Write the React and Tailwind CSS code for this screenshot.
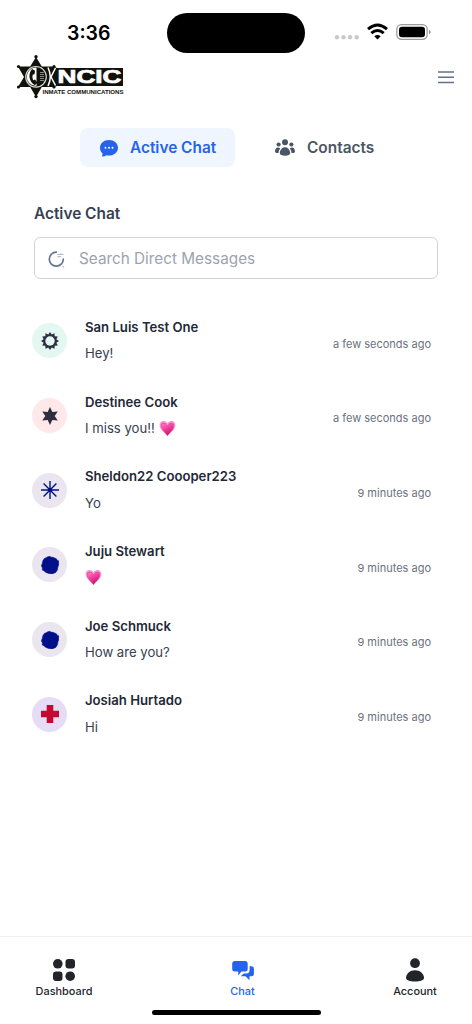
import React from 'react';
import clsx from 'clsx';

const chats = [
  { name: 'San Luis Test One', message: 'Hey!', time: 'a few seconds ago', icon: 'gear', bg: 'bg-[#e4f8f2]' },
  { name: 'Destinee Cook', message: 'I miss you!!', heart: true, time: 'a few seconds ago', icon: 'star', bg: 'bg-[#ffe8ea]' },
  { name: 'Sheldon22 Coooper223', message: 'Yo', time: '9 minutes ago', icon: 'burst', bg: 'bg-[#ebe5f0]' },
  { name: 'Juju Stewart', message: '', heart: true, time: '9 minutes ago', icon: 'blob', bg: 'bg-[#ebe5f0]' },
  { name: 'Joe Schmuck', message: 'How are you?', time: '9 minutes ago', icon: 'blob', bg: 'bg-[#ebe5f0]' },
  { name: 'Josiah Hurtado', message: 'Hi', time: '9 minutes ago', icon: 'cross', bg: 'bg-[#e7dcf5]' },
];

// Evenly spaced star outline around (cx, cy)
const starPoints = (cx, cy, outer, inner, count) =>
  Array.from({ length: count * 2 }, (_, i) => {
    const r = i % 2 ? inner : outer;
    const a = (Math.PI * i) / count - Math.PI / 2;
    return `${(cx + r * Math.cos(a)).toFixed(2)},${(cy + r * Math.sin(a)).toFixed(2)}`;
  }).join(' ');

const AvatarIcon = ({ type }) => (
  <svg viewBox="0 0 18 18" className="size-[18px]">
    {type === 'gear' && (
      <>
        <polygon points={starPoints(9, 9, 9, 6.6, 12)} fill="#2f2e41" />
        <circle cx="9" cy="9" r="4.7" fill="#e4f8f2" />
      </>
    )}
    {type === 'star' && <polygon points={starPoints(9, 9, 9, 4.7, 6)} fill="#2f2e41" />}
    {type === 'burst' && (
      <g stroke="#00108b" strokeWidth="1.4">
        <path d="M9 0v18M0 9h18M2.6 2.6l12.8 12.8M15.4 2.6L2.6 15.4" />
        <circle cx="9" cy="9" r="1.2" fill="#00108b" />
      </g>
    )}
    {type === 'blob' && (
      <path
        d="M7.200.4L9 .2l.6.9 2.400.2 3.400 1.500.8 1.400 1.700.7-.2 2.400.2 1.200-1 2.500-.4 2.700-1.700 2.700-2.400 1-1.600 1-.8-.6-2.600-.4-3-1.200-1.500-1.500-1.700-.8.3-2L.2 9.800l1-2 .6-3L3.300 2.500 5.500 1.600z"
        fill="#00108b"
        stroke="#00108b"
        strokeWidth="0.500"
        strokeLinejoin="round"
      />
    )}
    {type === 'cross' && <path d="M5.700 0h6.600v5.700H18v6.600h-5.700V18H5.700v-5.700H0V5.700h5.700z" fill="#c30b31" />}
  </svg>
);

const GrowingHeart = () => (
  <svg viewBox="0 0 17 17" className="h-[17px] w-[17px]">
    <defs>
      <linearGradient id="heart" x1="0" y1="0" x2="0.5" y2="1">
        <stop offset="0" stopColor="#ff7cc6" />
        <stop offset="0.5" stopColor="#ee3f9a" />
        <stop offset="1" stopColor="#c8156f" />
      </linearGradient>
    </defs>
    <path d="M8.500 16C6.500 13 .8 10 .6 5.300.5 2.600 2.300 1 4.500 1c1.900 0 3.300 1 4 2.600C9.200 2 10.600 1 12.500 1c2.200 0 4 1.600 3.900 4.300C16.200 10 10.500 13 8.500 16z" fill="#f58fca" />
    <path d="M8.500 15.700C6.500 13 1.600 10.200 1.500 5.800 1.500 3.500 2.900 2.200 4.700 2.200c1.800 0 3.200 1.100 3.800 2.900.6-1.800 2-2.900 3.800-2.900 1.800 0 3.200 1.300 3.200 3.600-.1 4.400-5 7.200-7 9.900z" fill="#ed4ca3" stroke="#fbc0e2" strokeWidth="0.5" />
    <path d="M8.500 15.800C7 13.200 2.800 10.300 2.600 6.500 2.500 4.700 3.600 3.600 5 3.600c1.700 0 3 1.300 3.500 3 .5-1.700 1.800-3 3.500-3 1.400 0 2.500 1.100 2.400 2.900-.2 3.800-4.400 6.700-5.900 9.300z" fill="url(#heart)" />
  </svg>
);

const StatusBar = () => (
  <div className="flex h-[53px] items-start">
    <div className="w-[167px] pt-[20px] pl-[67px] text-[19.500px] leading-[26px] font-semibold text-black">3:36</div>
    <div className="mt-[12.5px] h-[40.500px] w-[138px] rounded-full bg-black" />
    <svg viewBox="0 0 100 20" className="mt-[22px] ml-[29px] h-[20px] w-[100px]">
      <g fill="#c9c9c9">
        <circle cx="3" cy="15.300" r="2.200" />
        <circle cx="9.500" cy="15.300" r="2.200" />
        <circle cx="16" cy="15.300" r="2.200" />
        <circle cx="22.700" cy="15.300" r="2.200" />
      </g>
      <g fill="none" stroke="#000" strokeWidth="2.900">
        <path d="M34 7.200q9.500-8.200 19 0" />
        <path d="M37.300 11.200q6.200-5.400 12.400 0" />
      </g>
      <path d="M40.300 14.300q3.200-2.500 6.400 0L43.500 17.500z" />
      <rect x="62.800" y="2.700" width="30.400" height="14.600" rx="4.700" fill="none" stroke="#9c9c9c" strokeWidth="1.300" />
      <rect x="65" y="4.800" width="26" height="10.400" rx="3" />
      <path d="M95 7.900q3.200 2.100 0 4.400z" fill="#888" />
    </svg>
  </div>
);

const Logo = () => (
  <svg viewBox="0 0 110 46" className="h-[46px] w-[110px]">
    <g fill="#12120c">
      <path d="M20 3l5.800 9.500H38L41 14h66v18H41l-3 1H25.800L20 43l-5.800-10H2l6-10-6-10.500h12.200z" />
      <circle cx="20" cy="2.800" r="1.700" />
      <circle cx="20" cy="42.600" r="1.700" />
      <circle cx="2.500" cy="12.500" r="1.600" />
      <circle cx="2.500" cy="33" r="1.600" />
      <circle cx="38" cy="12.500" r="1.600" />
      <circle cx="38" cy="33" r="1.600" />
    </g>
    <circle cx="20" cy="22.800" r="10.300" fill="#12120c" stroke="#ddd" strokeWidth="1.100" />
    <path d="M20.500 13.500h-.5a9.300 9.300 0 0 0 0 18.600h.5z" fill="#fff" />
    <path d="M16.200 15c-4.500 4.500-3.500 13 2.800 16.200l2.300-2.700-2.300-2.900-1.700.6c-1-2-1.100-3.900-.4-5.700l1.700-.2.400-3.500z" fill="#12120c" />
    <path d="M24 18.500h4M24 20.500h4M24 22.500h4M24 24.500h4M24 26.500h4" stroke="#888" strokeWidth="1" />
    <path d="M32 13.500q4.500 9.500 0 18.500M39.500 14l-4.500 8.800 4.500 8.700" fill="none" stroke="#fff" strokeWidth="1.500" />
    <text x="41.500" y="29" textLength="64" lengthAdjust="spacingAndGlyphs" fontFamily="Liberation Sans" fontWeight="700" fontSize="17.500" fill="#fff" stroke="#fff" strokeWidth="0.700">NCIC</text>
    <text x="26.500" y="40" textLength="81" lengthAdjust="spacingAndGlyphs" fontFamily="Liberation Sans" fontWeight="700" fontSize="5.600" fill="#12120c">INMATE COMMUNICATIONS</text>
  </svg>
);

const Header = () => (
  <header className="flex h-[47px] items-start justify-between pr-[18px] pl-4">
    <div className="pt-px"><Logo /></div>
    <button className="pt-[17px]" aria-label="Menu">
      <svg viewBox="0 0 16 14" className="h-[14px] w-4" stroke="#64708a" strokeWidth="1.500">
        <path d="M0 2h16M0 7.200h16M0 12.500h16" />
      </svg>
    </button>
  </header>
);

const Tabs = () => (
  <div className="mt-7 flex h-[39px] pl-[80px] text-[15.400px] font-semibold">
    <button className="flex w-[154.500px] items-center rounded-lg bg-[#eff6ff] pl-[20px] text-[#2563eb]">
      <svg viewBox="0 0 18 17" className="mt-px h-[17px] w-[18px]">
        <path d="M9 0c5 0 9 3.300 9 7.800s-4 7.800-9 7.800c-.9 0-1.800-.1-2.600-.3C5 16.300 3.400 16.700 1.800 16.500c.6-.9.9-1.900.7-3C.9 12.100 0 10.100 0 7.800 0 3.300 4 0 9 0z" fill="currentColor" />
        <g fill="#fff">
          <circle cx="5.500" cy="7.800" r="1" />
          <circle cx="9" cy="7.800" r="1" />
          <circle cx="12.500" cy="7.800" r="1" />
        </g>
      </svg>
      <span className="ml-3">Active Chat</span>
    </button>
    <button className="ml-[40.500px] flex items-center text-[#4b5563]">
      <svg viewBox="0 0 20 17" className="h-[17px] w-5" fill="currentColor">
        <circle cx="10" cy="3.200" r="3" />
        <circle cx="3.600" cy="5.500" r="2.100" />
        <circle cx="16.400" cy="5.500" r="2.100" />
        <path d="M10 8.200c2.800 0 5.200 2.700 5.200 6 0 1.600-2.300 2.500-5.200 2.500s-5.200-.9-5.200-2.500c0-3.300 2.400-6 5.200-6z" />
        <path d="M2.700 8.600c1 0 2 .3 2.600.8-1.200 1.300-1.800 2.900-1.800 4.700C1.500 14.200 0 13.600 0 12.500c0-2 1.100-3.900 2.700-3.900zM17.300 8.600c-1 0-2 .3-2.600.8 1.200 1.300 1.800 2.900 1.800 4.700 2 .1 3.500-.5 3.500-1.600 0-2-1.100-3.900-2.700-3.900z" />
      </svg>
      <span className="ml-3">Contacts</span>
    </button>
  </div>
);

const SearchBox = () => (
  <label className="mt-[13px] flex h-[42px] items-center rounded-md border border-[#d1d5db] pl-[13px]">
    <svg viewBox="0 0 17 17" className="mt-0.5 size-[17px]" fill="none" stroke="#64748b" strokeWidth="1.700" strokeLinecap="round">
      <path d="M8.300 1.200A7 7 0 1 0 15.300 8.200" />
      <path d="M10 3.400h5M10 5.700h2.500M14.800 15.200l1 1" stroke="#b5bcc9" strokeWidth="1.200" />
    </svg>
    <input
      type="text"
      placeholder="Search Direct Messages"
      className="mt-0.5 ml-[14px] w-[300px] text-[15.300px] outline-none placeholder:text-[#9ca3af]"
    />
  </label>
);

const ChatRow = ({ chat }) => (
  <li className="flex h-[74.700px] items-center pr-[41px] pl-8">
    <div className={clsx('flex size-[35px] items-center justify-center rounded-full', chat.bg)}>
      <AvatarIcon type={chat.icon} />
    </div>
    <div className="ml-[18px] flex-1 pb-[1.500px]">
      <p className="text-[13.150px] leading-5 font-semibold text-[#1f2937]">{chat.name}</p>
      <p className="mt-[6.500px] flex h-5 items-center gap-1 text-[13.150px] leading-5 text-[#374151]">
        {chat.message && <span>{chat.message}</span>}
        {chat.heart && <GrowingHeart />}
      </p>
    </div>
    <span className="pt-[6px] text-[11px] text-[#6b7280]">{chat.time}</span>
  </li>
);

const BottomNav = () => (
  <nav className="mt-auto flex h-[88px] flex-col border-t border-[#eff0f2] text-[10.900px] font-medium text-[#212529]">
    <div className="flex justify-between pt-[22px] pr-[35px] pl-[35px]">
      <button className="flex w-[58px] flex-col items-center">
        <svg viewBox="0 0 22 22" className="size-[22px]" fill="currentColor">
          <circle cx="4.800" cy="4.800" r="4.800" />
          <rect x="12.500" y="0" width="9.500" height="9.500" rx="3" />
          <rect x="0" y="12.500" width="9.500" height="9.500" rx="3" />
          <circle cx="17.200" cy="17.200" r="4.800" />
        </svg>
        <span className="mt-px leading-[19px]">Dashboard</span>
      </button>
      <button className="flex flex-col items-center pr-[1px] text-[#2563eb]">
        <svg viewBox="0 0 22 22" className="size-[22px]" fill="currentColor">
          <path d="M2.500 2h11Q15.700 2 15.700 4.500v5.500q0 2.500-2.200 2.500h-4L6.200 16.500v-4H2.500Q.2 12.500.2 10V4.500Q.2 2 2.500 2z" />
          <path d="M17.600 7.200h1.700q2.600 0 2.600 2.500v5q0 2.500-2.600 2.500h-1.800v4l-4-4H8.700l3-2.700h2.500q3.400 0 3.400-3.500z" />
        </svg>
        <span className="mt-px leading-[19px]">Chat</span>
      </button>
      <button className="flex w-[44px] flex-col items-center">
        <svg viewBox="0 0 20 24" className="-mt-px h-6 w-5" fill="currentColor">
          <circle cx="10" cy="5.200" r="4.900" />
          <path d="M10 12.200c5 0 9 3.500 9 7.800 0 2.300-3.500 3.500-9 3.500s-9-1.200-9-3.500c0-4.300 4-7.800 9-7.800z" />
        </svg>
        <span className="leading-[19px]">Account</span>
      </button>
    </div>
    <div className="mx-auto mt-auto mb-[9px] h-[5.500px] w-[169px] rounded-full bg-black" />
  </nav>
);

const App = () => {
  return (
    <div className="flex h-screen flex-col overflow-hidden bg-white font-['Inter',sans-serif]">
      <StatusBar />
      <Header />
      <Tabs />
      <main className="pt-[35px]">
        <div className="pr-[34px] pl-[34px]">
          <h2 className="h-[22px] text-[15.400px] leading-6 font-semibold text-[#374151]">Active Chat</h2>
          <SearchBox />
        </div>
        <ul className="mt-[24.500px]">
          {chats.map(c => <ChatRow key={c.name} chat={c} />)}
        </ul>
      </main>
      <BottomNav />
    </div>
  );
};

export default App;
